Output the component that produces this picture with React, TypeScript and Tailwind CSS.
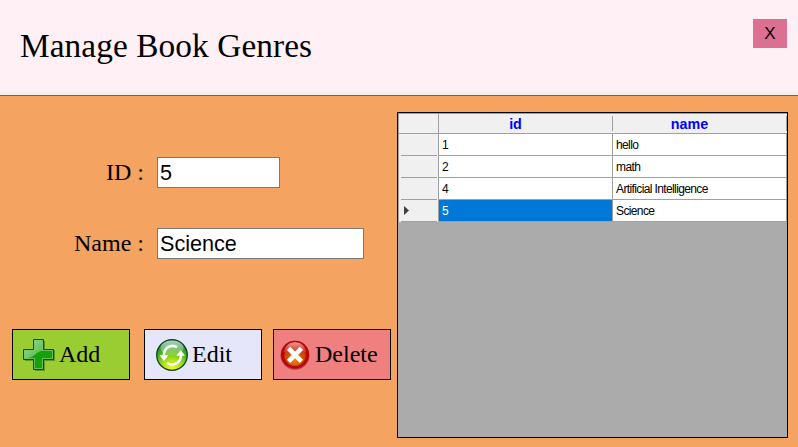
import React from "react";

const serif = "font-['Liberation_Serif',serif]";

function AddIcon() {
  return (
    <svg width="34" height="34" viewBox="0 0 34 34" className="shrink-0">
      <defs>
        <linearGradient id="plusShine" x1="0" y1="0" x2="1" y2="1">
          <stop offset="0" stopColor="#a4dda0" />
          <stop offset="1" stopColor="#4cb545" />
        </linearGradient>
      </defs>
      <path d="M12 3h10v9h10v11H22v10H12V23H2V12h10z" fill="#3c6a14" opacity=".55" />
      <path d="M10.500 1.500h10v10h10v10h-10v10h-10v-10h-10v-10h10z" fill="#16a00c" />
      <path d="M10.500 1.500h10v11c-5 .8-7 3-9.500 5-3 2.200-6 2.900-10.500 3v-9h10z" fill="url(#plusShine)" />
      <path d="M11.500 2.500h8v10h10v8h-10v10h-8v-10h-10v-8h10z" fill="none" stroke="#76c96c" opacity=".8" />
      <path d="M10.500 1.500h10v10h10v10h-10v10h-10v-10h-10v-10h10z" fill="none" stroke="#0a540b" />
    </svg>
  );
}

function EditIcon() {
  return (
    <svg width="32" height="32" viewBox="0 0 32 32" className="shrink-0">
      <defs>
        <radialGradient id="limeGlow" cx=".5" cy=".98" r=".9">
          <stop offset="0" stopColor="#f4ff20" />
          <stop offset=".4" stopColor="#a5e018" />
          <stop offset=".75" stopColor="#3fad20" />
          <stop offset="1" stopColor="#148044" />
        </radialGradient>
        <linearGradient id="limeShine" x1="0" y1="0" x2="0" y2="1">
          <stop offset="0" stopColor="#fff" stopOpacity=".65" />
          <stop offset="1" stopColor="#fff" stopOpacity=".12" />
        </linearGradient>
      </defs>
      <circle cx="16" cy="16" r="15.300" fill="url(#limeGlow)" stroke="#14421b" strokeWidth="1.300" />
      <ellipse cx="16" cy="9" rx="11.500" ry="7.500" fill="url(#limeShine)" />
      <path d="M21 8.200C14.500 4.500 8 9 7.800 16.500" fill="none" stroke="#fff" strokeWidth="2.600" />
      <path d="M3.600 16.300h8.800L8 22z" fill="#fff" />
      <path d="M11 24C17.500 27.800 24.800 23.500 25 16.500" fill="none" stroke="#fff" strokeWidth="2.600" />
      <path d="M20.200 16.800h8.800L24.800 11z" fill="#fff" />
    </svg>
  );
}

function DeleteIcon() {
  return (
    <svg width="30" height="30" viewBox="0 0 30 30" className="shrink-0">
      <defs>
        <radialGradient id="emberCore" cx=".5" cy=".7" r=".55">
          <stop offset="0" stopColor="#f08a00" />
          <stop offset="1" stopColor="#c03a08" />
        </radialGradient>
        <linearGradient id="redShine" x1="0" y1="0" x2="0" y2="1">
          <stop offset="0" stopColor="#f4a0a0" />
          <stop offset="1" stopColor="#c83a28" stopOpacity=".5" />
        </linearGradient>
      </defs>
      <circle cx="15" cy="15.300" r="14.500" fill="#8e3030" opacity=".7" />
      <circle cx="15" cy="14.700" r="14" fill="#bd0505" />
      <circle cx="15" cy="15" r="10.800" fill="url(#emberCore)" />
      <path d="M3.800 12C5 5.500 9.500 2.300 15 2.300S25 5.500 26.200 12c-5 2-17.400 2-22.400 0z" fill="url(#redShine)" />
      <path d="M8.600 8.300l12.800 13M21.400 8.300L8.600 21.300" stroke="#fff" strokeWidth="4.600" />
    </svg>
  );
}

function ActionButton({ color, icon, label, inset, gap }: { color: string; icon: React.ReactNode; label: string; inset: string; gap: string }) {
  return (
    <button className={`flex h-[51px] w-[118px] items-center border border-black text-2xl leading-none ${serif} ${color} ${inset} ${gap}`}>
      {icon}
      <span className="whitespace-nowrap pb-[2px]">{label}</span>
    </button>
  );
}

function Field({ label, value, width }: { label: string; value: string; width: string }) {
  return (
    <div className="flex h-[31px] items-center">
      <label className={`mr-[13px] w-[144px] whitespace-pre pb-[2px] text-right text-2xl leading-none ${serif}`}>{label}</label>
      <input
        readOnly
        value={value}
        className={`h-[31px] border border-[#7a7a7a] bg-white pl-[2px] pt-[2px] text-[21.6px] text-black outline-none ${width}`}
      />
    </div>
  );
}

const rows = [
  { id: "1", name: "hello" },
  { id: "2", name: "math" },
  { id: "4", name: "Artificial Intelligence" },
  { id: "5", name: "Science" },
];

export default function App() {
  return (
    <div className="flex h-[447px] w-[798px] flex-col overflow-hidden bg-[#f4a460] font-['Liberation_Sans',sans-serif] text-black">
      <header className="flex h-[92px] shrink-0 items-start justify-between bg-[#fff0f5] pl-5 pr-[11px]">
        <h1 className={`mt-[27px] whitespace-nowrap text-[33.3px] leading-[37px] tracking-[0.1px] ${serif}`}>Manage Book Genres</h1>
        <button className="mt-[19px] h-[29px] w-[34px] bg-[#db7093] text-[17px] leading-[29px]">X</button>
      </header>
      <div className="h-1 shrink-0 border-b border-[#646464] bg-[#f0f0f0]" />

      <main className="flex flex-1">
        <section className="flex w-[397px] shrink-0 flex-col pt-[61px]">
          <Field label="ID :" value="5" width="w-[123px]" />
          <div className="h-10" />
          <Field label="Name :" value="Science" width="w-[207px]" />
          <div className="mt-[70px] flex pl-3">
            <ActionButton color="bg-[#9acd32]" icon={<AddIcon />} label="Add" inset="pl-[10px]" gap="gap-[2px]" />
            <div className="w-[14px]" />
            <ActionButton color="bg-[#e6e6fa]" icon={<EditIcon />} label="Edit" inset="pl-[11px]" gap="gap-1" />
            <div className="w-[11px]" />
            <ActionButton color="bg-[#f08080]" icon={<DeleteIcon />} label="Delete" inset="pl-[6px]" gap="gap-[5px]" />
          </div>
        </section>

        <section className="mt-4 h-[326px] w-[391px] border border-black bg-[#ababab]">
          <div className="border-l border-t border-[#a0a0a0]">
            <div className="flex h-5 border-b border-[#a0a0a0] bg-[#f0f0f0] text-[14.300px] font-bold leading-[20px] text-[#0000ff]">
              <div className="w-10 border-r border-[#a0a0a0]" />
              <div className="flex w-[174px] py-[2px]">
                <div className="flex flex-1 items-center justify-center border-r border-[#a0a0a0] pr-[20px]">id</div>
              </div>
              <div className="flex flex-1 py-[2px]">
                <div className="flex flex-1 items-center justify-center border-r border-[#a0a0a0] pr-[20px]">name</div>
              </div>
            </div>
            {rows.map((row, i) => {
              const selected = i === rows.length - 1;
              return (
                <div key={row.id} className="flex h-[22px] text-[12px] leading-[23px]">
                  <div className="flex w-10 border-r border-[#a0a0a0] bg-[#f0f0f0] pl-[2px] pr-px">
                    <div className="flex flex-1 items-center border-b border-[#a0a0a0] pl-[3px]">
                      {selected && (
                        <svg width="5" height="9" viewBox="0 0 5 9">
                          <path d="M0 0l5 4.500L0 9z" fill="#404040" />
                        </svg>
                      )}
                    </div>
                  </div>
                  <div className={`w-[174px] border-b border-r border-[#a0a0a0] pl-[3px] ${selected ? "bg-[#0078d7] text-white" : "bg-white"}`}>{row.id}</div>
                  <div className="flex-1 whitespace-nowrap border-b border-r border-[#a0a0a0] bg-white pl-[3px] tracking-[-0.62px]">{row.name}</div>
                </div>
              );
            })}
          </div>
        </section>
      </main>
    </div>
  );
}
